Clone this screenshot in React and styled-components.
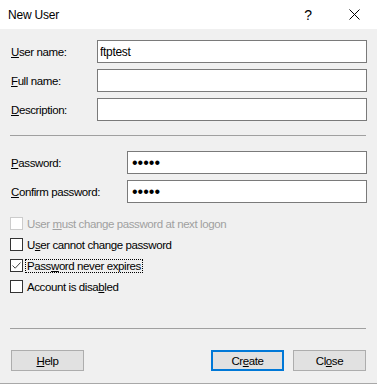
import React from 'react';
import styled, { createGlobalStyle } from 'styled-components';

const GlobalStyle = createGlobalStyle`
  * { box-sizing: border-box; }
  body {
    margin: 0;
    background: #f0f0f0;
    font-family: "Liberation Sans", Arial, sans-serif;
    font-size: 11.5px;
    letter-spacing: -0.4px;
    color: #000;
  }
`;

const Window = styled.div`
  width: 377px;
  height: 384px;
  background: #f0f0f0;
  border-bottom: 1px solid #a8a8a8;
  display: flex;
  flex-direction: column;
`;

const TitleBar = styled.div`
  height: 29px;
  background: #fff;
  display: flex;
  align-items: center;
  padding-left: 8px;
`;

const Title = styled.div`
  flex: 1;
  font-size: 12px;
  letter-spacing: -0.2px;
`;

const TitleButton = styled.div`
  width: 46px;
  height: 29px;
  display: flex;
  align-items: center;
  justify-content: center;
  font-size: 14px;
`;

const Body = styled.div`
  flex: 1;
  display: flex;
  flex-direction: column;
  padding: 11px 10px 0 10px;
`;

const FieldGrid = styled.div`
  display: grid;
  grid-template-columns: ${p => p.$labelWidth}px 1fr;
  row-gap: 6px;
  align-items: center;
`;

const Label = styled.label`
  padding-left: 1px;
  color: ${p => (p.$disabled ? '#a0a0a0' : '#000')};
`;

const TextBox = styled.input`
  height: 23px;
  width: 100%;
  border: 1px solid #7a7a7a;
  background: #fff;
  padding: 0 3px 0 ${p => (p.type === 'password' ? '4px' : '2px')};
  font-family: inherit;
  font-size: ${p => (p.type === 'password' ? '16px' : '12px')};
  color: #000;
  outline: none;
  letter-spacing: ${p => (p.type === 'password' ? '0px' : '-0.3px')};
`;

const Separator = styled.div`
  height: 1px;
  background: #a0a0a0;
  margin: ${p => p.$margin};
  margin-right: 1px;
`;

const CheckList = styled.div`
  display: flex;
  flex-direction: column;
  margin-top: 10px;
`;

const CheckRow = styled.div`
  height: 21px;
  display: flex;
  align-items: center;
  gap: 3px;
  color: ${p => (p.$disabled ? '#a0a0a0' : '#000')};
`;

const Box = styled.span`
  width: 13px;
  height: 13px;
  border: 1px solid ${p => (p.$disabled ? '#cccccc' : '#333333')};
  background: #fff;
  display: flex;
  align-items: center;
  justify-content: center;
`;

const CheckText = styled.span`
  padding: 0 1px;
  line-height: 12px;
  border: 1px dotted ${p => (p.$focus ? '#000' : 'transparent')};
  margin-left: -1px;
`;

const ButtonRow = styled.div`
  display: flex;
  align-items: center;
  gap: 9px;
  margin-top: 21px;
  padding: 0 1px;
`;

const Spacer = styled.div`
  flex: 1;
`;

const Button = styled.button`
  width: 73px;
  height: 21px;
  background: #e1e1e1;
  border: ${p => (p.$default ? '2px solid #0078d7' : '1px solid #adadad')};
  font-family: inherit;
  font-size: 11.5px;
  letter-spacing: -0.4px;
  color: #000;
  padding: 0;
`;

const CheckBox = ({ checked, disabled }) => (
  <Box $disabled={disabled}>
    {checked && (
      <svg width="11" height="11" viewBox="0 0 11 11">
        <path d="M1.5 5.5 L4.2 8.2 L9.5 2.5" fill="none" stroke="#444" strokeWidth="1" />
      </svg>
    )}
  </Box>
);

export default function App() {
  return (
    <>
      <GlobalStyle />
      <Window>
        <TitleBar>
          <Title>New User</Title>
          <TitleButton>?</TitleButton>
          <TitleButton>
            <svg width="11" height="11" viewBox="0 0 11 11">
              <path d="M0.5 0.5 L10.5 10.5 M10.5 0.5 L0.5 10.5" stroke="#000" strokeWidth="1" />
            </svg>
          </TitleButton>
        </TitleBar>
        <Body>
          <FieldGrid $labelWidth={87}>
            <Label><u>U</u>ser name:</Label>
            <TextBox type="text" defaultValue="ftptest" />
            <Label><u>F</u>ull name:</Label>
            <TextBox type="text" defaultValue="" />
            <Label><u>D</u>escription:</Label>
            <TextBox type="text" defaultValue="" />
          </FieldGrid>
          <Separator $margin="14px 0 15px 0" />
          <FieldGrid $labelWidth={117}>
            <Label><u>P</u>assword:</Label>
            <TextBox type="password" defaultValue="abcde" />
            <Label><u>C</u>onfirm password:</Label>
            <TextBox type="password" defaultValue="abcde" />
          </FieldGrid>
          <CheckList>
            <CheckRow $disabled>
              <CheckBox disabled />
              <CheckText>User <u>m</u>ust change password at next logon</CheckText>
            </CheckRow>
            <CheckRow>
              <CheckBox />
              <CheckText>U<u>s</u>er cannot change password</CheckText>
            </CheckRow>
            <CheckRow>
              <CheckBox checked />
              <CheckText $focus>Pass<u>w</u>ord never expires</CheckText>
            </CheckRow>
            <CheckRow>
              <CheckBox />
              <CheckText>Account is disa<u>b</u>led</CheckText>
            </CheckRow>
          </CheckList>
          <Separator $margin="31px 0 0 0" />
          <ButtonRow>
            <Button><u>H</u>elp</Button>
            <Spacer />
            <Button $default>Cr<u>e</u>ate</Button>
            <Button>Cl<u>o</u>se</Button>
          </ButtonRow>
        </Body>
      </Window>
    </>
  );
}
